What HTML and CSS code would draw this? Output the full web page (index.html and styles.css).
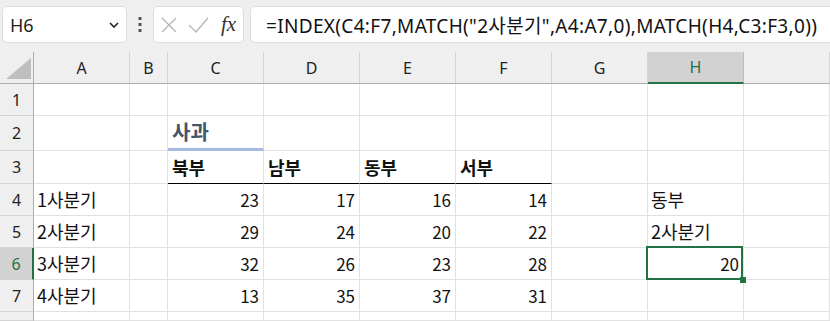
FILE: index.html
```html
<!doctype html>
<html lang="ko">
  <head>
    <meta charset="UTF-8" />
    <title>INDEX MATCH</title>
    <link rel="stylesheet" href="styles.css">
  </head>
  <body>
    <div class="topbar">
      <div class="namebox">
        <span>H6</span>
        <svg class="chevron" width="10" height="6" viewBox="0 0 10 6">
          <path d="M1 1 L5 5 L9 1" fill="none" stroke="#222" stroke-width="1.6" />
        </svg>
      </div>
      <div class="grip">
        <svg width="4" height="16" viewBox="0 0 4 16">
          <rect x="0.5" y="0" width="3" height="3" fill="#555" />
          <rect x="0.5" y="6" width="3" height="3" fill="#555" />
          <rect x="0.5" y="12" width="3" height="3" fill="#555" />
        </svg>
      </div>
      <div class="fbuttons">
        <svg width="16" height="16" viewBox="0 0 16 16">
          <path d="M1 1 L15 15 M15 1 L1 15" stroke="#b4b4b4" stroke-width="1.3" />
        </svg>
        <svg width="21" height="16" viewBox="0 0 21 16">
          <path d="M1 8 L8 15 L20 1" fill="none" stroke="#b4b4b4" stroke-width="1.3" />
        </svg>
        <span class="fx">fx</span>
      </div>
      <div class="formula">=INDEX(C4:F7,MATCH("2사분기",A4:A7,0),MATCH(H4,C3:F3,0))</div>
    </div>

    <div class="sheet">
      <div class="row head">
        <div class="corner"></div>
        <div class="col">A</div>
        <div class="col">B</div>
        <div class="col">C</div>
        <div class="col">D</div>
        <div class="col">E</div>
        <div class="col">F</div>
        <div class="col">G</div>
        <div class="col col--active">H</div>
        <div class="col"></div>
      </div>

      <div class="row">
        <div class="rh">1</div>
        <div class="cell"></div><div class="cell"></div><div class="cell"></div><div class="cell"></div>
        <div class="cell"></div><div class="cell"></div><div class="cell"></div><div class="cell"></div><div class="cell"></div>
      </div>

      <div class="row row--tall">
        <div class="rh">2</div>
        <div class="cell"></div><div class="cell"></div>
        <div class="cell title">사과</div>
        <div class="cell"></div><div class="cell"></div><div class="cell"></div><div class="cell"></div><div class="cell"></div><div class="cell"></div>
      </div>

      <div class="row row--mid">
        <div class="rh">3</div>
        <div class="cell"></div><div class="cell"></div>
        <div class="cell heading">북부</div>
        <div class="cell heading">남부</div>
        <div class="cell heading">동부</div>
        <div class="cell heading">서부</div>
        <div class="cell"></div><div class="cell"></div><div class="cell"></div>
      </div>

      <div class="row">
        <div class="rh">4</div>
        <div class="cell">1사분기</div><div class="cell"></div>
        <div class="cell num">23</div><div class="cell num">17</div><div class="cell num">16</div><div class="cell num">14</div>
        <div class="cell"></div><div class="cell">동부</div><div class="cell"></div>
      </div>

      <div class="row">
        <div class="rh">5</div>
        <div class="cell">2사분기</div><div class="cell"></div>
        <div class="cell num">29</div><div class="cell num">24</div><div class="cell num">20</div><div class="cell num">22</div>
        <div class="cell"></div><div class="cell">2사분기</div><div class="cell"></div>
      </div>

      <div class="row">
        <div class="rh rh--active">6</div>
        <div class="cell">3사분기</div><div class="cell"></div>
        <div class="cell num">32</div><div class="cell num">26</div><div class="cell num">23</div><div class="cell num">28</div>
        <div class="cell"></div><div class="cell num selected">20</div><div class="cell"></div>
      </div>

      <div class="row">
        <div class="rh">7</div>
        <div class="cell">4사분기</div><div class="cell"></div>
        <div class="cell num">13</div><div class="cell num">35</div><div class="cell num">37</div><div class="cell num">31</div>
        <div class="cell"></div><div class="cell"></div><div class="cell"></div>
      </div>

      <div class="row row--cut">
        <div class="rh"></div>
        <div class="cell"></div><div class="cell"></div><div class="cell"></div><div class="cell"></div>
        <div class="cell"></div><div class="cell"></div><div class="cell"></div><div class="cell"></div><div class="cell"></div>
      </div>
    </div>
  </body>
</html>
```

FILE: styles.css
```css
* {
  box-sizing: border-box;
}

:root {
  --chrome: #efefef;
  --grid: #e1e1e1;
  --head-line: #ababab;
  --green: #217346;
  --active: #d2d2d2;
}

body {
  margin: 0;
  overflow: hidden;
  background: #fff;
  color: #111;
  font-family: "Noto Sans CJK KR", sans-serif;
}

/* formula bar */

.topbar {
  height: 52px;
  display: flex;
  align-items: flex-start;
  padding: 6px 0 0 2px;
  background: var(--chrome);
  overflow: hidden;
}

.namebox,
.fbuttons,
.formula {
  flex-shrink: 0;
  height: 37px;
  background: #fff;
  border: 1px solid #dcdcdc;
  border-radius: 5px;
  display: flex;
  align-items: center;
}

.namebox {
  width: 125px;
  justify-content: space-between;
  padding: 0 7px 0 7px;
  font-family: "Noto Sans", sans-serif;
  font-size: 18px;
  color: #222;
}

.grip {
  flex-shrink: 0;
  width: 26px;
  height: 37px;
  display: flex;
  align-items: center;
  justify-content: center;
}

.fbuttons {
  width: 91px;
  padding: 0 6px 0 7px;
  gap: 11px;
}

.fx {
  font-family: "Liberation Serif", serif;
  font-style: italic;
  font-size: 21px;
  color: #333;
  margin-left: 1px;
}

.formula {
  width: 620px;
  margin-left: 6px;
  padding-left: 15px;
  font-family: "Noto Sans", "Noto Sans CJK KR", sans-serif;
  font-size: 19px;
  letter-spacing: 0.33px;
  color: #111;
  white-space: nowrap;
}

/* sheet grid */

.row {
  display: grid;
  grid-template-columns: 34px 96px 38px 96px 96px 96px 96px 96px 96px 1fr;
  height: 32px;
}

.row--tall {
  height: 35px;
}

.row--mid {
  height: 33px;
}

.row--cut {
  height: 9px;
}

.row.head {
  height: 32px;
  background: var(--chrome);
}

.corner {
  border-right: 1px solid var(--head-line);
  border-bottom: 1px solid var(--head-line);
  position: relative;
}

.corner::after {
  content: "";
  position: absolute;
  left: 6px;
  top: 6px;
  width: 25px;
  height: 21px;
  background: #bfbfbf;
  clip-path: polygon(100% 0, 100% 100%, 0 100%);
}

.col {
  display: flex;
  align-items: center;
  justify-content: center;
  border-right: 1px solid #d4d4d4;
  border-bottom: 1px solid var(--head-line);
  font-family: "Noto Sans", sans-serif;
  font-size: 16px;
  color: #222;
}

.col--active {
  background: var(--active);
  color: var(--green);
  border-bottom: 2px solid var(--green);
  border-right-color: #bdbdbd;
}

.rh {
  display: flex;
  align-items: center;
  justify-content: center;
  background: var(--chrome);
  border-right: 1px solid var(--head-line);
  border-bottom: 1px solid #d4d4d4;
  font-family: "Noto Sans", sans-serif;
  font-size: 16px;
  color: #222;
}

.rh--active {
  background: var(--active);
  color: var(--green);
  border-right: 2px solid var(--green);
}

.cell {
  display: flex;
  align-items: center;
  padding: 0 4px 1px 3px;
  border-right: 1px solid var(--grid);
  border-bottom: 1px solid var(--grid);
  font-size: 18px;
  white-space: nowrap;
}

.num {
  justify-content: flex-end;
  font-size: 17px;
}

.title {
  padding-left: 4px;
  font-size: 20px;
  font-weight: bold;
  color: #44546a;
  border-bottom: 3px solid #a6b9e0;
}

.heading {
  padding-left: 4px;
  font-weight: bold;
  border-bottom-color: #000;
}

.selected {
  position: relative;
}

.selected::after {
  content: "";
  position: absolute;
  top: -2px;
  left: -2px;
  right: 0;
  bottom: -1px;
  border: 2px solid var(--green);
}

.selected::before {
  content: "";
  position: absolute;
  right: -3px;
  bottom: -4px;
  width: 6px;
  height: 6px;
  background: var(--green);
  z-index: 1;
}
```
